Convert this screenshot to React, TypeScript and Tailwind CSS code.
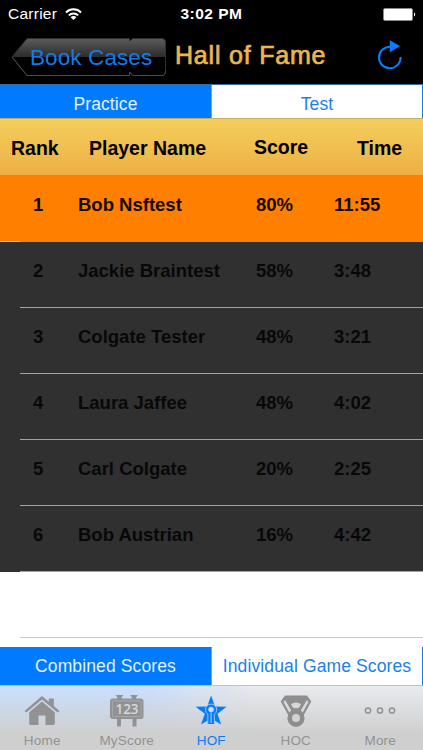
import React from 'react'

const players = [
  { name: 'Bob Nsftest', score: '80%', time: '11:55' },
  { name: 'Jackie Braintest', score: '58%', time: '3:48' },
  { name: 'Colgate Tester', score: '48%', time: '3:21' },
  { name: 'Laura Jaffee', score: '48%', time: '4:02' },
  { name: 'Carl Colgate', score: '20%', time: '2:25' },
  { name: 'Bob Austrian', score: '16%', time: '4:42' },
]

function StatusBar() {
  return (
    <div className="h-7 grid grid-cols-3 items-center text-white">
      <div className="flex items-center gap-[8px] pl-2">
        <span className="text-[15.5px] leading-none tracking-[0.25px]">Carrier</span>
        <svg width="17" height="13" viewBox="0 0 17 13" fill="none" stroke="white" strokeWidth="2">
          <path d="M1 4.5 C5 0.3 12 0.3 16 4.5" />
          <path d="M3.8 7.4 C6.4 4.8 10.6 4.8 13.2 7.4" />
          <path d="M8.5 12 L5.6 9.3 C7.2 7.7 9.8 7.7 11.4 9.3 Z" fill="white" stroke="none" />
        </svg>
      </div>
      <span className="text-center text-[15.5px] leading-none font-bold tracking-[0.5px]">3:02 PM</span>
      <div className="flex justify-end pr-[7px]">
        <svg width="33" height="13" viewBox="0 0 33 13">
          <rect x="0.5" y="0.5" width="29" height="12" rx="1.5" fill="white" stroke="#8a8a8a" />
          <path d="M31 4.5 C32.6 5 32.6 8 31 8.5 Z" fill="white" />
        </svg>
      </div>
    </div>
  )
}

function BackButton() {
  return (
    <button className="relative ml-[11px] w-[156px] h-[40px] text-left">
      <svg className="absolute inset-0" width="156" height="40" viewBox="0 0 156 40">
        <defs>
          <linearGradient id="gloss" x1="0" y1="0" x2="0" y2="1">
            <stop offset="0" stopColor="#5c5c5c" />
            <stop offset="0.49" stopColor="#2c2c2c" />
            <stop offset="0.5" stopColor="#020202" />
            <stop offset="1" stopColor="#000" />
          </linearGradient>
        </defs>
        <path d="M16 1.500 H118.500 V4 L122 1.500 H151 Q154.500 1.500 154.500 5 V34 Q154.500 38.500 151 38.500 H122 L118.500 35 V38.500 H16 L1 20 Z" fill="url(#gloss)" stroke="#303030" />
        <path d="M1 20 L16 38.500 H118.500 V35 L122 38.500 H151 Q154.500 38.500 154.500 34" fill="none" stroke="#4c4c4c" />
      </svg>
      <span className="relative block pl-[19px] text-[22.500px] leading-[35px] tracking-[0.1px] text-[#127bea] whitespace-nowrap">Book Cases</span>
    </button>
  )
}

function Segments({ left, right, className }: { left: string; right: string; className: string }) {
  return (
    <div className={`flex bg-white border-r border-[#0a7cff] text-[17.500px] tracking-[0.120px] ${className}`}>
      <button className="w-[211px] bg-[#007aff] text-[#e4f1ff]">{left}</button>
      <button className="flex-1 border-l border-[#5aa9ff] text-[#1a7fe8] whitespace-nowrap">{right}</button>
    </div>
  )
}

function HomeIcon() {
  return (
    <svg width="36" height="32" viewBox="0 0 36 32" fill="#929292">
      <path d="M18 1 L24.800 6.800 V3.500 H29.800 V11 L35.500 16 L33.700 17.600 L18 4.400 L2.300 17.600 L0.500 16 Z" />
      <path d="M18 6.500 L30.800 17.300 V28.500 Q30.800 30 29.300 30 H21.500 V20.500 H14.500 V30 H6.700 Q5.200 30 5.200 28.500 V17.300 Z" />
    </svg>
  )
}

function ScoreIcon() {
  return (
    <svg width="36" height="32" viewBox="0 0 36 32">
      <path d="M6.500 0 H14.500 L12.500 2.500 V5 H8.500 V2.500 Z M21 0 H29 L27 2.500 V5 H23 V2.500 Z M8 22 H12 V31.500 H8 Z M23.500 22 H27.500 V31.500 H23.500 Z" fill="#929292" />
      <rect x="1" y="3.500" width="33.500" height="20.500" rx="3" fill="#929292" />
      <rect x="3.400" y="5.900" width="28.700" height="15.700" rx="1" fill="none" stroke="#b0b3b8" strokeWidth="0.7" />
      <text x="18" y="18.700" textAnchor="middle" fontFamily="Open Sans, sans-serif" fontSize="13.500" fontWeight="600" fill="#d5d9df">123</text>
    </svg>
  )
}

function StarIcon() {
  return (
    <svg width="36" height="32" viewBox="0 0 36 32">
      <path d="M18.100 0.500 L22 11.600 L33.600 11.800 L24.400 18.800 L28.200 29.500 L18 23.500 L8 29.500 L11.800 18.800 L2.600 11.800 L14.200 11.600 Z" fill="#087bf5" />
      <path d="M14.800 29 V19.200 A5.600 5.600 0 1 1 21.400 19.200 V29" fill="#087bf5" stroke="#a9cbee" strokeWidth="0.9" />
      <circle cx="18.100" cy="14.500" r="2.700" fill="#d0d9e4" />
      <path d="M18.100 17.500 V28" stroke="#b9d0e8" strokeWidth="1" />
    </svg>
  )
}

function MedalIcon() {
  return (
    <svg width="36" height="32" viewBox="0 0 36 32">
      <path d="M7 0.500 H29 L33.300 6.500 L25.800 20 A8.500 8.500 0 1 1 10.200 20 L2.700 6.500 Z" fill="#8e8e8e" />
      <path d="M7.200 5 L13.200 15.500 L11.300 17.500 L5.500 7 Z M28.800 5 L22.800 15.500 L24.700 17.500 L30.500 7 Z" fill="#d7d8da" />
      <path d="M13 9 Q18 6 23 9 L21 12.500 Q18 14.200 15 12.500 Z" fill="#d7d8da" />
      <circle cx="18" cy="23" r="4" fill="#d2d2d3" />
    </svg>
  )
}

function MoreIcon() {
  return (
    <svg width="36" height="32" viewBox="0 0 36 32" fill="none" stroke="#929292" strokeWidth="1.500">
      <circle cx="6" cy="15.500" r="2.600" />
      <circle cx="18" cy="15.500" r="2.600" />
      <circle cx="30" cy="15.500" r="2.600" />
    </svg>
  )
}

const tabs = [
  { label: 'Home', icon: <HomeIcon /> },
  { label: 'MyScore', icon: <ScoreIcon /> },
  { label: 'HOF', icon: <StarIcon />, active: true },
  { label: 'HOC', icon: <MedalIcon /> },
  { label: 'More', icon: <MoreIcon /> },
]

export default function App() {
  return (
    <div className="w-full h-[750px] flex flex-col bg-white overflow-hidden font-['Liberation_Sans',sans-serif]">
      <header className="h-[84px] bg-black">
        <StatusBar />
        <div className="flex h-14 pt-[9px]">
          <BackButton />
          <h1 className="ml-[8px] w-[154px] text-[25px] leading-[36px] tracking-[0.800px] text-[#ecb64c] whitespace-nowrap [-webkit-text-stroke:0.7px_#ecb64c]">Hall of Fame</h1>
          <button className="ml-[48px] h-[32px]">
            <svg width="26" height="32" viewBox="0 0 26 32">
              <path d="M13.500 9.700 A10.800 10.800 0 1 0 23.600 20" fill="none" stroke="#0a7cff" strokeWidth="2" />
              <path d="M12.800 3.300 L23 9 L12.800 15.500 Z" fill="#0a7cff" />
            </svg>
          </button>
        </div>
      </header>

      <Segments left="Practice" right="Test" className="h-[34px] border-t border-t-[#3b6da6] leading-[39px]" />

      <div className="h-[57px] grid grid-cols-[78px_167px_93px_1fr] border-t border-[#c9ad59] bg-linear-to-b from-[#f3ce5c] to-[#edb043] text-[19.500px] leading-[58px] font-bold">
        <span className="pl-[11px]">Rank</span>
        <span className="pl-[11px]">Player Name</span>
        <span className="pl-[9px] leading-[56px]">Score</span>
        <span className="pl-[19px]">Time</span>
      </div>

      {players.map((player, i) => (
        <div
          key={player.name}
          className={`relative h-[66px] shrink-0 grid grid-cols-[78px_178px_78px_1fr] text-[18.500px] leading-[59px] font-bold ${i === 0 ? 'bg-[#ff8000] text-[#140a00]' : 'bg-[#303030] text-[#080808]'}`}
        >
          <span className="pl-[33px]">{i + 1}</span>
          <span>{player.name}</span>
          <span>{player.score}</span>
          <span>{player.time}</span>
          {/* the separator overlaps the first pixel of the next row */}
          <div className={`absolute z-10 -bottom-px inset-x-0 h-px border-l-[20px] ${i === 0 ? 'bg-[#c98b49] border-[#f3c08c]' : 'bg-[#a2a2a2] border-[#303030]'}`} />
        </div>
      ))}

      <div className="ml-5 h-[67px] border-b border-[#c8c7cc]" />
      <div className="h-[9px]" />

      <Segments left="Combined Scores" right="Individual Game Scores" className="h-[38px] leading-[39px]" />

      <nav className="h-[65px] grid grid-cols-[repeat(5,84.500px)] border-t border-[#b9c4d2] bg-[linear-gradient(to_bottom,transparent,#cfcfcf_75%),linear-gradient(to_right,#c9dfff_35%,#e8eaee_60%)]">
        {tabs.map((tab) => (
          <button key={tab.label} className={`flex flex-col items-center pt-[9px] ${tab.active ? 'text-[#087bf5]' : 'text-[#929292]'}`}>
            {tab.icon}
            <span className="mt-[6px] text-[13.500px] leading-4 tracking-[0.2px]">{tab.label}</span>
          </button>
        ))}
      </nav>
    </div>
  )
}
